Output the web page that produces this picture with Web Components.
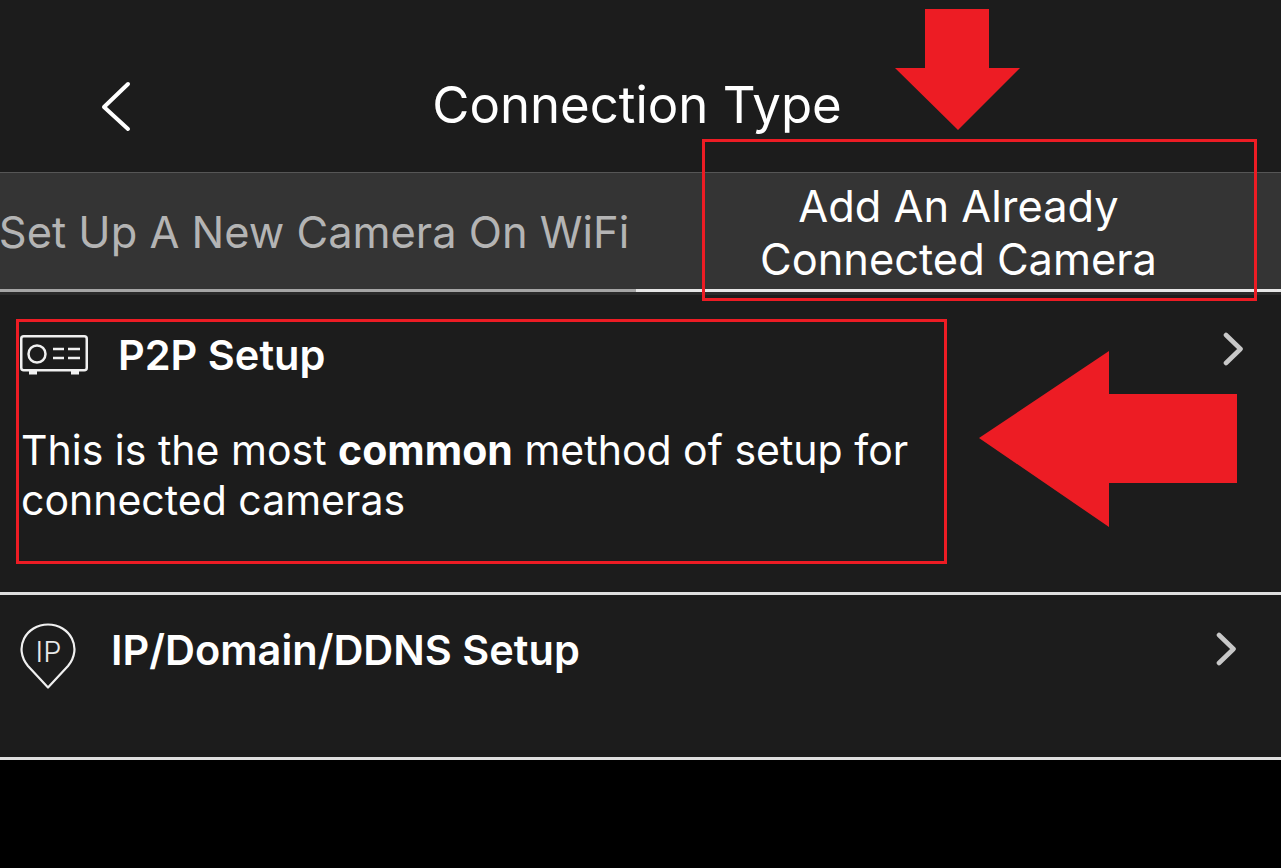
<!DOCTYPE html>
<html lang="en"><head><meta charset="utf-8"><title>Connection Type</title>
<style>
html,body{margin:0;padding:0;background:#000;}
body{width:1281px;height:868px;overflow:hidden;position:relative;font-family:Inter,"Liberation Sans",sans-serif;color:#fff;}
</style></head><body>
<connection-screen></connection-screen>
<template id="t-screen"><style>
:host{display:flex;flex-direction:column;width:1281px;height:868px;background:#000;position:relative;}
.hl{position:absolute;border:3px solid #ed1c24;box-sizing:border-box;pointer-events:none;}
svg.a{position:absolute;display:block;}
</style>
<nav-header title="Connection Type"></nav-header>
<tab-bar></tab-bar>
<setup-row label="P2P Setup">
 <svg slot="icon" width="68" height="41" viewBox="0 0 68 41" fill="none" stroke="#f0f0f0" stroke-width="2.500"><rect x="1.250" y="1.250" width="65.500" height="34" rx="2.500"/><circle cx="17" cy="19" r="8.500"/><path d="M33 14h11M48 14h12M33 23h11M48 23h12"/><path d="M9 37.500h8M51 37.500h8" stroke-width="4"/></svg>
 This is the most <b>common</b> method of setup for<br>connected cameras
</setup-row>
<setup-row label="IP/Domain/DDNS Setup" second>
 <svg slot="icon" width="58" height="66" viewBox="0 0 58 66" fill="none" stroke="#f0f0f0" stroke-width="2.200"><path d="M28 64.500 L8 43 C-7 25 6 1.500 28 1.500 C50 1.500 63 25 48 43 Z" stroke-linejoin="round"/><text x="28.500" y="39" text-anchor="middle" font-family="Inter,'Liberation Sans',sans-serif" font-size="29" fill="#e8e8e8" stroke="none" font-weight="300">IP</text></svg>
</setup-row>
<div class="hl" style="left:702px;top:139px;width:555px;height:162px"></div>
<div class="hl" style="left:16px;top:319px;width:931px;height:245px"></div>
<svg class="a" style="left:894px;top:8px" width="128" height="124" viewBox="0 0 128 124"><path d="M31 1H95V60H126L64 122L1 60H31Z" fill="#ed1c24"/></svg>
<svg class="a" style="left:978px;top:350px" width="260" height="178" viewBox="0 0 260 178"><path d="M1 88L131 1V44H259V133H131V177Z" fill="#ed1c24"/></svg>
</template>
<template id="t-header"><style>
:host{display:flex;align-items:center;justify-content:center;height:172px;background:#1c1c1c;position:relative;box-sizing:border-box;padding:38px 7px 0 0;}
h1{margin:0;font:400 50.900px/70px Inter,"Liberation Sans",sans-serif;color:#fff;}
svg{position:absolute;left:100px;top:81px;}
</style>
<svg width="32" height="52" viewBox="0 0 32 52" fill="none" stroke="#fff" stroke-width="4" stroke-linecap="round" stroke-linejoin="round"><path d="M28 3L4 26L28 48"/></svg>
<h1></h1></template>
<template id="t-tabs"><style>
:host{display:flex;height:123px;box-sizing:border-box;background:#343434;border-top:1px solid #565656;border-bottom:3px solid #2a2a2a;font:400 43.400px/53px Inter,"Liberation Sans",sans-serif;}
.t{box-sizing:border-box;display:flex;align-items:center;justify-content:center;text-align:center;white-space:nowrap;height:119px;border-bottom:3px solid;}
.l{width:636px;color:#b4b4b4;border-color:#a5a5a5;padding:2px 8px 0 0;}
.r{flex:1;color:#fff;border-color:#e6e6e6;padding-top:4px;}
</style>
<div class="t l">Set Up A New Camera On WiFi</div>
<div class="t r"><div>Add An Already<br>Connected Camera</div></div>
</template>
<template id="t-row"><style>
:host{display:block;box-sizing:border-box;background:#1c1c1c;border-bottom:3px solid #dedede;position:relative;padding:37px 0 0 20px;height:300px;}
:host([second]){height:165px;padding-top:28px;}
.h{display:flex;align-items:center;gap:30px;}
:host([second]) .h{gap:33px;}
.l{font:600 41.500px/46px Inter,"Liberation Sans",sans-serif;color:#fff;}
:host([second]) .l{margin-bottom:12px;}
.d{font:400 41px/50px Inter,"Liberation Sans",sans-serif;color:#fff;margin:47px 0 0 1px;}
:host([second]) .d{display:none;}
::slotted(b){font-weight:700;}
svg.c{position:absolute;left:1222px;top:37px;}
:host([second]) svg.c{left:1215px;top:37px;}
</style>
<div class="h"><slot name="icon"></slot><span class="l"></span></div>
<div class="d"><slot></slot></div>
<svg class="c" width="22" height="34" viewBox="0 0 22 34" fill="none" stroke="#c8c8c8" stroke-width="4.600" stroke-linecap="round" stroke-linejoin="round"><path d="M4 3L18.500 17L4 31"/></svg>
</template>
<script>
function mount(el,id){const r=el.attachShadow({mode:'open'});r.appendChild(document.getElementById(id).content.cloneNode(true));return r;}
customElements.define('nav-header',class extends HTMLElement{connectedCallback(){if(this.shadowRoot)return;const r=mount(this,'t-header');r.querySelector('h1').textContent=this.getAttribute('title');}});
customElements.define('tab-bar',class extends HTMLElement{connectedCallback(){if(!this.shadowRoot)mount(this,'t-tabs');}});
customElements.define('setup-row',class extends HTMLElement{connectedCallback(){if(this.shadowRoot)return;const r=mount(this,'t-row');r.querySelector('.l').textContent=this.getAttribute('label');}});
customElements.define('connection-screen',class extends HTMLElement{connectedCallback(){if(!this.shadowRoot)mount(this,'t-screen');}});
</script>
</body></html>
